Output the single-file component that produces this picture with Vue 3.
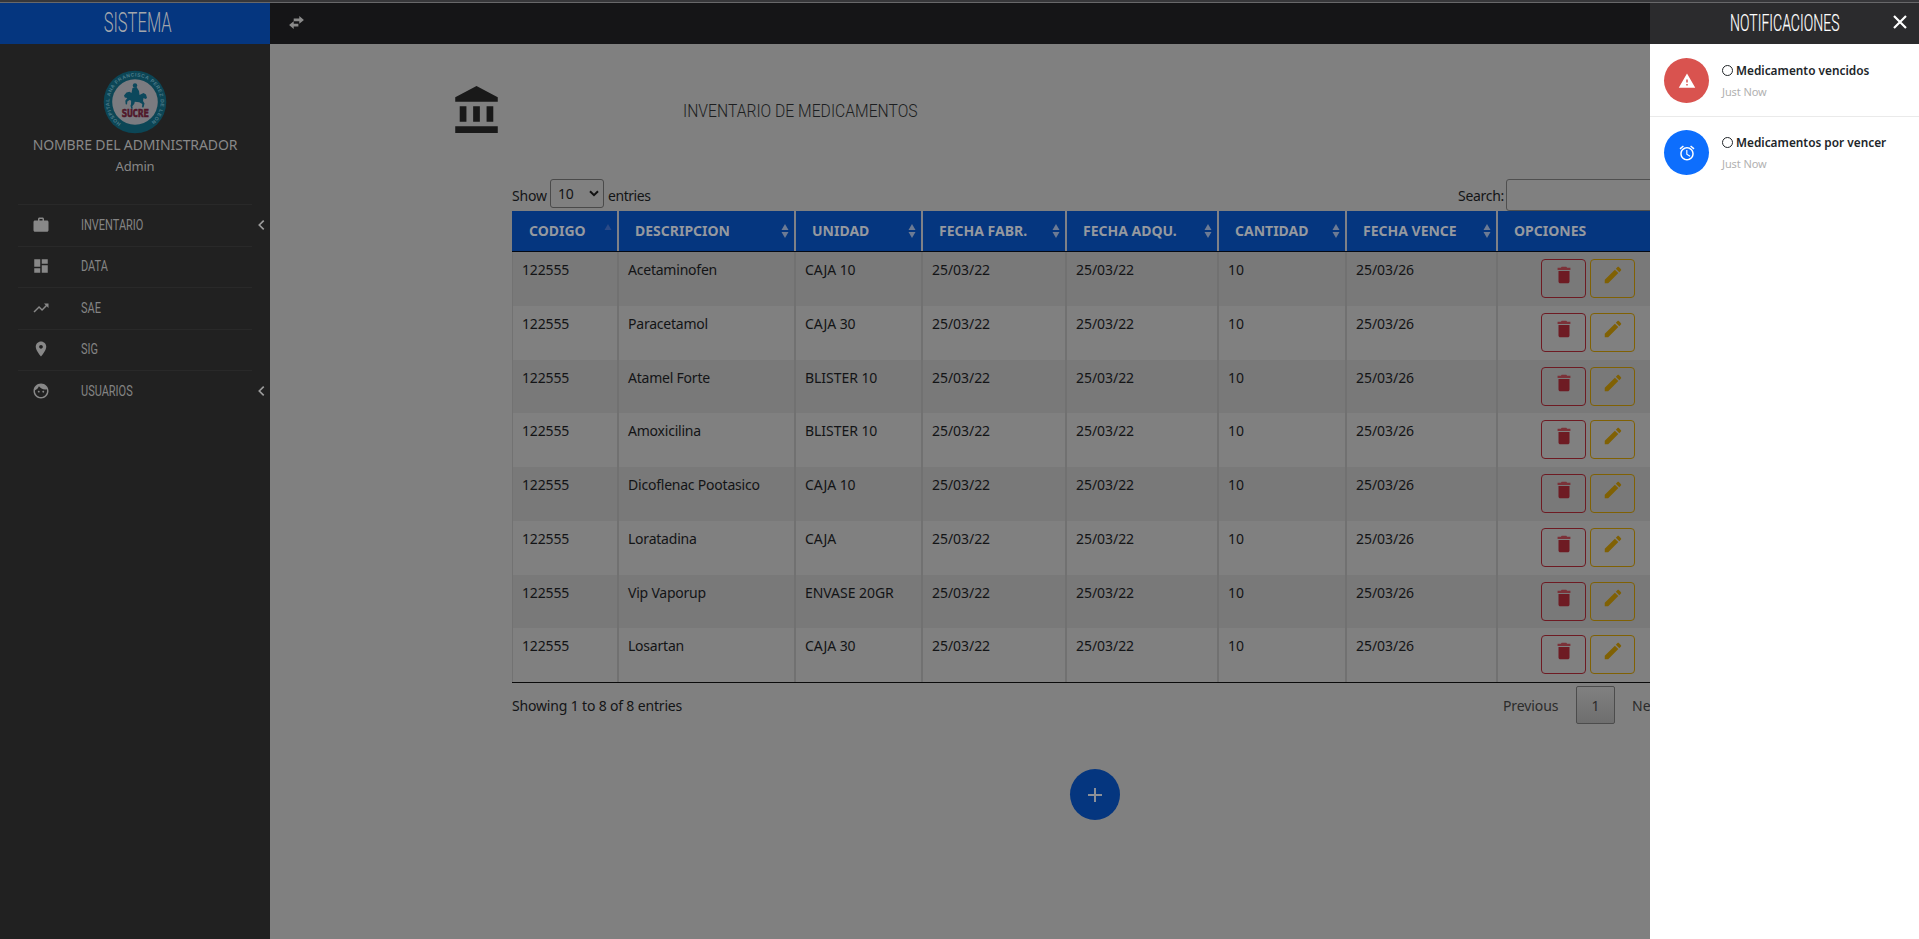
<script setup>
const icons = {
  work: 'M20 6h-4V4c0-1.110-.890-2-2-2h-4c-1.110 0-2 .890-2 2v2H4c-1.110 0-1.990.890-1.990 2L2 19c0 1.110.890 2 2 2h16c1.110 0 2-.890 2-2V8c0-1.110-.890-2-2-2zm-6 0h-4V4h4v2z',
  dash: 'M3 13h8V3H3v10zm0 8h8v-6H3v6zm10 0h8V11h-8v10zm0-18v6h8V3h-8z',
  trend: 'M16 6l2.290 2.290-4.880 4.880-4-4L2 16.590 3.410 18l6-6 4 4 6.300-6.290L22 12V6z',
  pin: 'M12 2C8.130 2 5 5.130 5 9c0 5.250 7 13 7 13s7-7.750 7-13c0-3.870-3.130-7-7-7zm0 9.500c-1.380 0-2.500-1.120-2.500-2.500s1.120-2.500 2.500-2.500 2.500 1.120 2.500 2.500-1.120 2.500-2.500 2.500z',
  face: 'M9 11.750c-.690 0-1.250.560-1.250 1.250s.560 1.250 1.250 1.250 1.250-.560 1.250-1.250-.560-1.250-1.250-1.250zm6 0c-.690 0-1.250.560-1.250 1.250s.560 1.250 1.250 1.250 1.250-.560 1.250-1.250-.560-1.250-1.250-1.250zM12 2C6.480 2 2 6.480 2 12s4.480 10 10 10 10-4.480 10-10S17.520 2 12 2zm0 18c-4.410 0-8-3.590-8-8 0-.290.020-.580.050-.860 2.360-1.050 4.230-2.980 5.210-5.370C11.070 8.330 14.050 10 17.420 10c.780 0 1.530-.090 2.250-.260.210.710.330 1.470.330 2.260 0 4.410-3.590 8-8 8z'
}
const menu = [
  { label: 'INVENTARIO', icon: icons.work, sub: true },
  { label: 'DATA', icon: icons.dash },
  { label: 'SAE', icon: icons.trend },
  { label: 'SIG', icon: icons.pin },
  { label: 'USUARIOS', icon: icons.face, sub: true }
]
const columns = ['CODIGO', 'DESCRIPCION', 'UNIDAD', 'FECHA FABR.', 'FECHA ADQU.', 'CANTIDAD', 'FECHA VENCE']
const rows = [
  ['Acetaminofen', 'CAJA 10'],
  ['Paracetamol', 'CAJA 30'],
  ['Atamel Forte', 'BLISTER 10'],
  ['Amoxicilina', 'BLISTER 10'],
  ['Dicoflenac Pootasico', 'CAJA 10'],
  ['Loratadina', 'CAJA'],
  ['Vip Vaporup', 'ENVASE 20GR'],
  ['Losartan', 'CAJA 30']
].map(([name, unit]) => ['122555', name, unit, '25/03/22', '25/03/22', '10', '25/03/26'])
</script>

<template>
  <div class="screen">
    <div class="strip"></div>
    <div class="body">
      <aside class="sidebar">
        <div class="brand"><span class="brand-text">SISTEMA</span></div>
        <div class="profile">
          <svg class="logo" viewBox="0 0 64 64">
            <defs>
              <path id="ring" d="M18 53.500 A25.600 25.600 0 1 1 46 53.500" />
            </defs>
            <circle cx="32" cy="32" r="31.300" fill="#0c4656" />
            <circle cx="32" cy="32" r="22.800" fill="#7b7b80" />
            <text class="ring-text"><textPath href="#ring" textLength="128">HOSPITAL ANA FRANCISCA PEREZ DE LEON</textPath></text>
            <g fill="#0c485c">
              <circle cx="32" cy="15.500" r="2.200" />
              <path d="M29.500 18l4-1 2.500 4 .5 4 4-2 2.500 1.500 1 3.500-1.500 1-2-1-.5 3 1.500 2.500-1 4-1.500-.2.300-3.300-3-1.800-4.500-.5-.5 2-2 2.500.5 2.300-1.500.2-.8-3 1.500-4.700-2.500-1-2.200 1.500-.3 3-1.300-.3-.4-3.500 2-2.700-2.500-.5-.8-2 2.500-3 3-.7 2 1.200z" />
            </g>
            <path stroke="#0c485c" stroke-width=".9" d="M28.500 30v8" />
            <text x="32.300" y="47" class="sucre" textLength="27" lengthAdjust="spacingAndGlyphs">SUCRE</text>
          </svg>
          <div class="name">NOMBRE DEL ADMINISTRADOR</div>
          <div class="role">Admin</div>
        </div>
        <nav>
          <div v-for="m in menu" :key="m.label" class="item">
            <svg class="mi" viewBox="0 0 24 24"><path :d="m.icon" /></svg>
            <span class="label">{{ m.label }}</span>
            <svg v-if="m.sub" class="chev" viewBox="0 0 6 9"><path d="M5 .500L1 4.500 5 8.500" /></svg>
          </div>
        </nav>
      </aside>

      <main>
        <header class="topbar">
          <svg viewBox="0 0 17 14"><path d="M16.500 4.200L11.500 0v2.800H5.500v2.800h6v2.800zM.500 9.800l5 4.200v-2.800h5V8.400h-5V5.600z" /></svg>
        </header>
        <div class="title">
          <svg viewBox="2 1 19 21"><path d="M4 10v7h3v-7H4zm6 0v7h3v-7h-3zM2 22h19v-3H2v3zm14-12v7h3v-7h-3zm-4.500-9L2 6v2h19V6l-9.500-5z" /></svg>
          <span class="title-text">INVENTARIO DE MEDICAMENTOS</span>
        </div>
        <section class="data">
          <div class="tools">
            <div class="length">
              <span class="w-show">Show</span>
              <span class="select">10<svg viewBox="0 0 10 7"><path d="M1 1.200l4 4 4-4" /></svg></span>
              <span class="w-entries">entries</span>
            </div>
            <div class="search"><span>Search:</span><span class="input"></span></div>
          </div>
          <div class="grid head">
            <div v-for="(c, i) in columns" :key="c" class="th">
              <span>{{ c }}</span>
              <svg class="sort" :class="{ asc: i === 0 }" viewBox="0 0 8 14"><path d="M4 0l3.500 6h-7z" /><path v-if="i" d="M4 14l3.500-6h-7z" /></svg>
            </div>
            <div class="th"><span>OPCIONES</span></div>
          </div>
          <div v-for="(r, i) in rows" :key="i" class="grid row">
            <div v-for="(c, j) in r" :key="j" class="td" :class="{ text: j === 1 }">{{ c }}</div>
            <div class="td actions">
              <span class="btn del"><svg viewBox="0 0 24 24"><path d="M6 19c0 1.100.9 2 2 2h8c1.100 0 2-.9 2-2V7.500H6V19z" /><path class="lid" d="M19 4h-3.500l-1-1h-5l-1 1H5v2.500h14V4z" /></svg></span>
              <span class="btn edit"><svg viewBox="0 0 24 24"><path d="M3 17.250V21h3.750L17.810 9.940l-3.750-3.750L3 17.250zM20.710 7.040c.390-.390.390-1.020 0-1.410l-2.340-2.340c-.390-.390-1.020-.390-1.410 0l-1.830 1.830 3.750 3.750 1.830-1.830z" /></svg></span>
            </div>
          </div>
          <div class="foot">
            <span class="info">Showing 1 to 8 of 8 entries</span>
            <div class="pager"><span class="prev">Previous</span><span class="page">1</span><span class="next">Next</span></div>
          </div>
        </section>
        <div class="fab"><svg viewBox="0 0 14 14"><path d="M7 0v14M0 7h14" /></svg></div>
      </main>

      <aside class="notes">
        <header><span class="notes-title">NOTIFICACIONES</span>
          <svg viewBox="0 0 14 14"><path d="M1 1l12 12M13 1L1 13" /></svg>
        </header>
        <div class="note">
          <span class="badge red"><svg viewBox="0 0 24 24"><path d="M1 21h22L12 2 1 21zm12-3h-2v-2h2v2zm0-4h-2v-4h2v4z" /></svg></span>
          <div><div class="msg"><i></i><b>Medicamento vencidos</b></div><small>Just Now</small></div>
        </div>
        <div class="note">
          <span class="badge blue"><svg viewBox="0 0 24 24"><path d="M22 5.720l-4.600-3.860-1.290 1.530 4.600 3.860L22 5.720zM7.880 3.390L6.600 1.860 2 5.710l1.290 1.530 4.590-3.850zM12.500 8H11v6l4.750 2.850.750-1.230-4-2.370V8zM12 4c-4.970 0-9 4.030-9 9s4.020 9 9 9c4.970 0 9-4.030 9-9s-4.030-9-9-9zm0 16c-3.870 0-7-3.130-7-7s3.130-7 7-7 7 3.130 7 7-3.130 7-7 7z" /></svg></span>
          <div><div class="msg"><i></i><b>Medicamentos por vencer</b></div><small>Just Now</small></div>
        </div>
      </aside>
    </div>
  </div>
</template>

<style>
body { overflow: hidden; }
</style>

<style scoped>
* { box-sizing: border-box; }
.screen { width: 1919px; height: 939px; overflow: hidden; display: flex; flex-direction: column; background: #808080; font-family: "Noto Sans", "Open Sans", sans-serif; font-size: 14px; color: #131416; }
svg { display: block; }
.strip { height: 3px; background: #37373a; border-bottom: 1px solid #68686a; flex: none; }
.body { flex: 1; display: grid; grid-template-columns: 270px 1380px 269px; min-height: 0; }

.sidebar { background: #212121; color: #888; display: flex; flex-direction: column; }
.brand { height: 41px; background: #05367f; display: flex; justify-content: center; align-items: center; padding: 0 0 2px 5px; }
.brand-text { font: 300 28px/1 "Roboto", sans-serif; color: #a3a6ac; transform: scaleX(.59); white-space: nowrap; }
.profile { display: flex; flex-direction: column; align-items: center; padding-top: 26px; height: 160px; }
.logo { width: 64px; height: 64px; flex: none; }
.ring-text { font: 700 5px "Liberation Sans", sans-serif; fill: #4d7b89; }
.sucre { font: 700 10px "DejaVu Sans Mono", monospace; fill: #501729; stroke: #501729; stroke-width: .6; text-anchor: middle; }
.name { font: 14px/20px "Noto Sans", sans-serif; margin-top: 1px; white-space: nowrap; letter-spacing: -.12px; }
.role { font: 13px/22px "Noto Sans", sans-serif; letter-spacing: -.2px; }
nav { width: 234px; margin: 0 18px; }
.item { height: 41.500px; border-top: 1px solid #292929; display: flex; align-items: center; position: relative; padding-bottom: 1px; }
.mi { width: 18px; height: 18px; fill: #888; margin-left: 14px; }
.label { font: 400 14px/1 "Roboto", sans-serif; margin-left: 31px; transform: scaleX(.785); transform-origin: 0 50%; color: #848484; }
.chev { position: absolute; right: -13px; top: 15px; width: 7px; height: 10px; fill: none; stroke: #9b9b9b; stroke-width: 1.500; }

main { overflow: hidden; min-width: 0; }
.topbar { height: 41px; background: #151517; padding: 13px 18px; }
.topbar svg { width: 17px; height: 13px; fill: #8a8a8a; }
.title { display: flex; padding: 42px 0 0 185px; height: 136px; }
.title svg { width: 43px; height: 47px; fill: #191919; }
.title-text { font: 300 18px/1 "Roboto", sans-serif; margin: 16px 0 0 185px; transform: scaleX(.872); transform-origin: 0 0; white-space: nowrap; color: #1c1e20; }
.data { margin-left: 242px; width: 1240px; }
.tools { height: 31px; display: flex; justify-content: space-between; }
.length { display: flex; letter-spacing: -.15px; }
.w-show { width: 38px; line-height: 31px; }
.select { width: 54px; height: 29px; margin: -1px 4px 0 0; border: 1px solid #4a4a4a; border-radius: 3px; padding-left: 7px; line-height: 27px; display: flex; align-items: center; }
.select svg { width: 10px; height: 7px; margin-left: 15px; fill: none; stroke: #111; stroke-width: 2; }
.w-entries { line-height: 31px; letter-spacing: -.45px; }
.search { display: flex; width: 294px; line-height: 32px; letter-spacing: -.3px; margin-top: -1px; }
.search span:first-child { width: 48px; line-height: 34px; }
.input { flex: 1; border: 1px solid #4f4f4f; border-radius: 3px; }
.grid { display: grid; grid-template-columns: 107px 177px 127px 144px 152px 128px 151px 254px; }
.head { height: 41px; background: #05367f; border-bottom: 1px solid #050a14; }
.th { display: flex; justify-content: space-between; align-items: center; padding: 0 5px 0 17px; border-right: 2px solid #7f8187; font: 700 14px/1 "Noto Sans", sans-serif; color: #95999f; white-space: nowrap; }
.th:not(:first-child) { padding-left: 16px; }
.sort { width: 8px; height: 14px; fill: #6d7b94; }
.asc { fill: #2b4a86; }
.row { height: 53.750px; }
.row:nth-child(odd) { background: #797979; }
.td { padding: 8px 0 0 9px; line-height: 19px; border-right: 2px solid #717171; white-space: nowrap; letter-spacing: -.05px; }
.td:first-child { letter-spacing: -.15px; border-left: 1px solid #727272; }
.td.text { letter-spacing: -.22px; }
.td.actions { display: flex; gap: 4px; padding: 7px 0 0 43px; }
.btn { width: 45px; height: 39px; border: 1px solid #6e1b23; border-radius: 4px; display: flex; justify-content: center; padding-top: 4px; }
.btn svg { width: 22px; height: 22px; fill: #6e1b23; }
.btn .lid { fill: #7c3138; }
.edit { border-color: #806104; }
.edit svg { fill: #806104; }
.foot { border-top: 1px solid #0a0a0a; display: flex; justify-content: space-between; }
.info { margin-top: 13px; letter-spacing: -.17px; }
.pager { display: flex; width: 249px; margin-top: 3px; line-height: 39px; color: #2b2b2b; }
.prev { width: 73px; letter-spacing: -.1px; }
.page { width: 39px; height: 38px; line-height: 37px; border: 1px solid #4c4c4c; border-radius: 2px; background: linear-gradient(#808080, #6e6e6e); text-align: center; margin-right: 17px; }
.fab { width: 50px; height: 51px; margin: 44px 0 0 800px; border-radius: 50%; background: #05367f; display: flex; align-items: center; justify-content: center; }
.fab svg { width: 14px; height: 14px; stroke: #8d9097; stroke-width: 2; }

.notes { background: #fff; color: #212529; }
.notes header { height: 41px; background: #2b2b2d; position: relative; display: flex; align-items: center; justify-content: center; }
.notes-title { font: 300 23px/1 "Roboto", sans-serif; color: #fff; transform: scaleX(.61); white-space: nowrap; -webkit-text-stroke: .2px #fff; }
.notes header svg { position: absolute; right: 12px; top: 12px; width: 14px; height: 14px; stroke: #fff; stroke-width: 2.200; }
.note { height: 72px; padding: 14px; display: flex; gap: 13px; }
.note + .note { border-top: 1px solid #eaeaea; padding-top: 13px; }
.badge { flex: none; width: 45px; height: 45px; border-radius: 50%; display: flex; align-items: center; justify-content: center; }
.badge svg { width: 18px; height: 18px; fill: #fff; }
.red { background: #d9534f; }
.blue { background: #0d6efd; }
.msg { display: flex; align-items: center; height: 24px; font: 13px/24px "Noto Sans", sans-serif; white-space: nowrap; }
.msg b { font-weight: 600; transform: scaleX(.91); transform-origin: 0 50%; }
.msg i { width: 11px; height: 11px; border: 1px solid #212529; border-radius: 50%; margin-right: 3px; flex: none; }
small { display: block; font: 11px/20px "Noto Sans", sans-serif; color: #b1b1b1; letter-spacing: -.1px; }
</style>
